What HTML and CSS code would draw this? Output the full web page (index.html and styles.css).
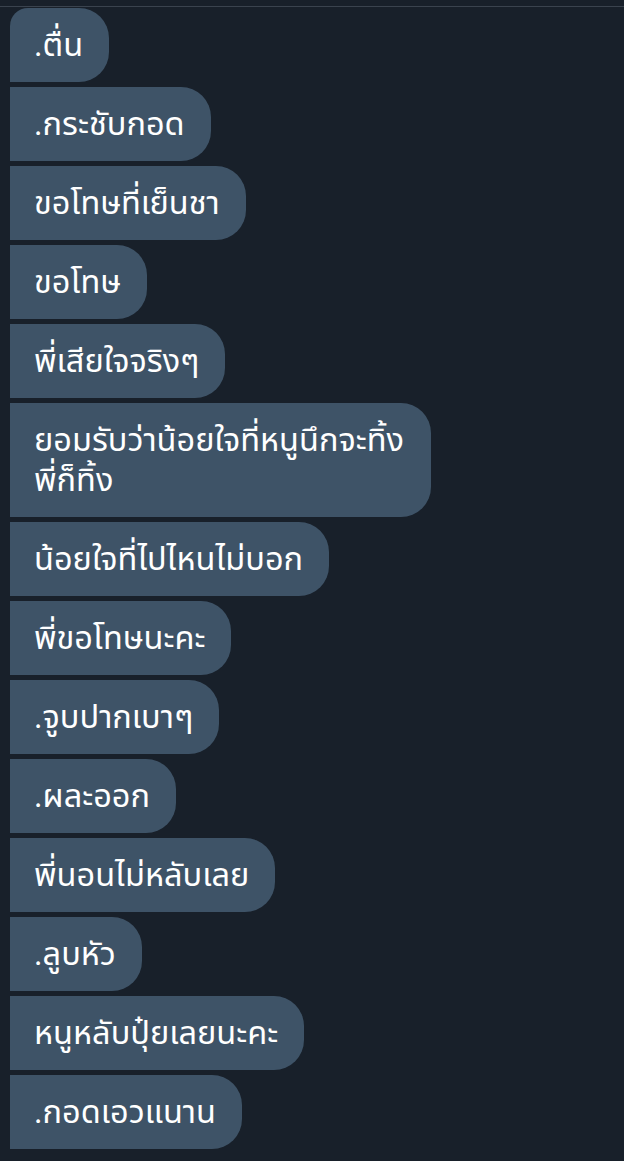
FILE: index.html
```html
<!DOCTYPE html>
<html lang="th">
<head>
<meta charset="utf-8">
<link rel="stylesheet" href="styles.css">
</head>
<body>
<div class="topline"></div>
<div class="chat">
  <div class="bubble first">.ตื่น</div>
  <div class="bubble">.กระชับกอด</div>
  <div class="bubble">ขอโทษที่เย็นชา</div>
  <div class="bubble">ขอโทษ</div>
  <div class="bubble">พี่เสียใจจริงๆ</div>
  <div class="bubble">ยอมรับว่าน้อยใจที่หนูนึกจะทิ้ง พี่ก็ทิ้ง</div>
  <div class="bubble">น้อยใจที่ไปไหนไม่บอก</div>
  <div class="bubble">พี่ขอโทษนะคะ</div>
  <div class="bubble">.จูบปากเบาๆ</div>
  <div class="bubble">.ผละออก</div>
  <div class="bubble">พี่นอนไม่หลับเลย</div>
  <div class="bubble">.ลูบหัว</div>
  <div class="bubble">หนูหลับปุ๋ยเลยนะคะ</div>
  <div class="bubble">.กอดเอวแนาน</div>
</div>
</body>
</html>
```
FILE: styles.css
```css
html, body {
  margin: 0;
  padding: 0;
  background: #18202a;
}
body {
  font-family: Roboto, "Noto Sans Thai", sans-serif;
  color: #ffffff;
  height: 1161px;
  overflow: hidden;
}
.topline {
  margin-top: 6px;
  height: 1px;
  background: #3a434e;
}
.chat {
  display: flex;
  flex-direction: column;
  align-items: flex-start;
  gap: 5px;
  padding: 1px 0 0 10px;
}
.bubble {
  background: #3e5367;
  font-size: 32.5px;
  line-height: 40px;
  padding: 17px 26px 17px 24px;
  border-radius: 0 30px 30px 0;
  max-width: 371px;
}
.bubble.first {
  border-top-left-radius: 18px;
}
```
